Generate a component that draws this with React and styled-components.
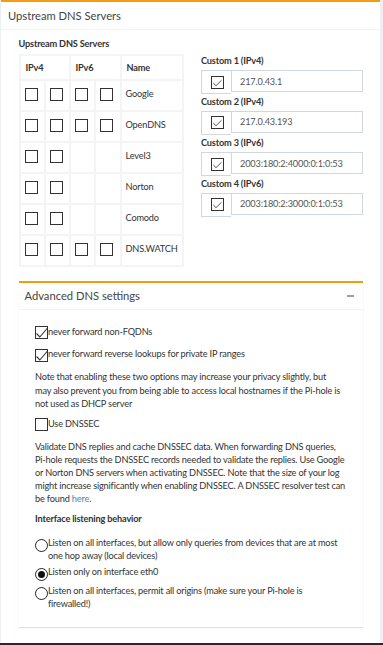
import React from 'react';
import styled, { createGlobalStyle } from 'styled-components';

const Global = createGlobalStyle`
  html, body { margin: 0; padding: 0; }
  body {
    background: #ecf0f5;
    font-family: Lato, "Noto Sans", sans-serif;
    color: #333;
    width: 383px;
    height: 645px;
    overflow: hidden;
    letter-spacing: -0.17px;
  }
  * { box-sizing: border-box; }
`;

const Page = styled.div`
  height: 645px;
  display: flex;
  flex-direction: column;
`;

const Frame = styled.div`
  flex: 1;
  display: flex;
  padding: 0 3px 0 1px;
  min-height: 0;
`;

const Box = styled.section`
  flex: 1;
  min-width: 0;
  background: #fff;
  border-top: 2px solid #f39c12;
  box-shadow: ${(p) => (p.$inner ? '0 1px 1px rgba(0,0,0,0.12)' : 'none')};
`;

const BoxHeader = styled.div`
  display: flex;
  align-items: center;
  justify-content: space-between;
  height: ${(p) => p.$h}px;
  padding: 0 ${(p) => p.$pad}px;
  border-bottom: 1px solid #f4f4f4;
`;

const BoxTitle = styled.h3`
  margin: 0;
  font-size: 11.2px;
  font-weight: 400;
  color: #444;
  line-height: 1;
  letter-spacing: 0;
`;

const Minus = styled.span`
  display: block;
  width: 7px;
  height: 1.5px;
  background: #97a0b3;
  margin-right: 3px;
`;

const BoxBody = styled.div`
  padding: 7px;
`;

const Columns = styled.div`
  display: grid;
  grid-template-columns: minmax(0, 1fr) minmax(0, 1fr);
`;

const Col = styled.div`
  min-width: 0;
  padding: ${(p) => p.$top || 0}px 10.5px 0;
`;

const FieldLabel = styled.div`
  font-size: 9.2px;
  font-weight: 700;
  line-height: 13px;
  margin-bottom: ${(p) => p.$mb || 0}px;
`;

const Table = styled.table`
  border-collapse: collapse;
  table-layout: fixed;
  width: 163px;
  font-size: 9.2px;
`;

const Th = styled.th`
  border: 2px solid #f4f4f4;
  height: 25px;
  padding: 0 5px;
  text-align: left;
  font-weight: 700;
  vertical-align: middle;
`;

const Td = styled.td`
  border: 2px solid #f4f4f4;
  height: 31px;
  padding: ${(p) => (p.$name ? '6px 4px 0' : '7px 0 0 4px')};
  vertical-align: top;
  line-height: 13px;
  white-space: nowrap;
`;

const Box13 = styled.span`
  display: inline-flex;
  flex: none;
  width: 13px;
  height: 13px;
  border: 1px solid #333;
  background: #fff;
  position: relative;
  margin-top: ${(p) => p.$mt || 0}px;
  vertical-align: top;
`;

const CheckSvg = styled.svg`
  position: absolute;
  left: -1px;
  top: -1px;
  overflow: visible;
`;

function Check({ checked, mt, big }) {
  return (
    <Box13 $mt={mt}>
      {checked && (
        <CheckSvg width="13" height="13" viewBox="0 0 13 13">
          {big ? (
            <polyline points="1.5,7.5 4.8,11 12.5,2" fill="none" stroke="#333" strokeWidth="1.1" />
          ) : (
            <polyline points="2.3,7 5,9.7 10.5,4.3" fill="none" stroke="#555" strokeWidth="1" />
          )}
        </CheckSvg>
      )}
    </Box13>
  );
}

const InputGroup = styled.div`
  display: flex;
  align-items: flex-start;
  margin-bottom: ${(p) => p.$mb || 0}px;
`;

const Addon = styled.div`
  width: 30px;
  height: 24px;
  border: 1px solid #d2d6de;
  border-right: none;
  display: flex;
  align-items: center;
  justify-content: center;
  padding-left: 1px;
`;

const TextInput = styled.div`
  flex: 1;
  height: 22px;
  border: 1px solid #d2d6de;
  padding-left: 8px;
  display: flex;
  align-items: center;
  font-size: 9.2px;
  color: #555;
`;

const AdvWrap = styled.div`
  padding: 14px 10.5px 0;
`;

const AdvBody = styled.div`
  padding: 14.5px 15px 16.5px 16.5px;
  font-size: 9.2px;
`;

const OptRow = styled.label`
  display: flex;
  align-items: flex-start;
  line-height: ${(p) => p.$lh || 13}px;
  margin-top: ${(p) => p.$mt || 0}px;
`;

const OptText = styled.span`
  flex: 1;
`;

const Para = styled.p`
  margin: ${(p) => p.$mt || 0}px 0 0;
  line-height: ${(p) => p.$lh || 13}px;
`;

const Link = styled.a`
  color: #3c8dbc;
  text-decoration: none;
`;

const Bold = styled.div`
  font-weight: 700;
  line-height: 13px;
  margin-top: ${(p) => p.$mt || 0}px;
`;

const RadioDot = styled.span`
  flex: none;
  width: 13px;
  height: 13px;
  border-radius: 50%;
  border: 1px solid #222;
  margin-top: ${(p) => p.$mt || 0}px;
  display: flex;
  align-items: center;
  justify-content: center;
  &::after {
    content: '';
    width: 7px;
    height: 7px;
    border-radius: 50%;
    background: ${(p) => (p.$on ? '#111' : 'transparent')};
  }
`;

const BottomBar = styled.div`
  height: 2px;
  background: #2a2a2a;
`;

const rows = [
  { name: 'Google', v6: true },
  { name: 'OpenDNS', v6: true },
  { name: 'Level3', v6: false },
  { name: 'Norton', v6: false },
  { name: 'Comodo', v6: false },
  { name: 'DNS.WATCH', v6: true },
];

const customs = [
  { label: 'Custom 1 (IPv4)', value: '217.0.43.1' },
  { label: 'Custom 2 (IPv4)', value: '217.0.43.193' },
  { label: 'Custom 3 (IPv6)', value: '2003:180:2:4000:0:1:0:53' },
  { label: 'Custom 4 (IPv6)', value: '2003:180:2:3000:0:1:0:53' },
];

export default function App() {
  return (
    <Page>
      <Global />
      <Frame>
        <Box>
          <BoxHeader $h={28} $pad={7}>
            <BoxTitle>Upstream DNS Servers</BoxTitle>
          </BoxHeader>
          <BoxBody>
            <Columns>
              <Col>
                <FieldLabel $mb={4}>Upstream DNS Servers</FieldLabel>
                <Table>
                  <colgroup>
                    <col style={{ width: 25 }} />
                    <col style={{ width: 25 }} />
                    <col style={{ width: 25 }} />
                    <col style={{ width: 26 }} />
                    <col style={{ width: 62 }} />
                  </colgroup>
                  <thead>
                    <tr>
                      <Th colSpan={2}>IPv4</Th>
                      <Th colSpan={2}>IPv6</Th>
                      <Th>Name</Th>
                    </tr>
                  </thead>
                  <tbody>
                    {rows.map((r) => (
                      <tr key={r.name}>
                        <Td><Check /></Td>
                        <Td><Check /></Td>
                        <Td>{r.v6 && <Check />}</Td>
                        <Td>{r.v6 && <Check />}</Td>
                        <Td $name>{r.name}</Td>
                      </tr>
                    ))}
                  </tbody>
                </Table>
              </Col>
              <Col $top={17}>
                {customs.map((c, i) => (
                  <div key={c.label}>
                    <FieldLabel $mb={3}>{c.label}</FieldLabel>
                    <InputGroup $mb={i === 1 ? 1.5 : 0.5}>
                      <Addon><Check checked /></Addon>
                      <TextInput>{c.value}</TextInput>
                    </InputGroup>
                  </div>
                ))}
              </Col>
            </Columns>
            <AdvWrap>
              <Box $inner>
                <BoxHeader $h={27} $pad={6}>
                  <BoxTitle>Advanced DNS settings</BoxTitle>
                  <Minus />
                </BoxHeader>
                <AdvBody>
                  <OptRow>
                    <Check checked big mt={1.5} />
                    <OptText>never forward non-FQDNs</OptText>
                  </OptRow>
                  <OptRow $mt={8}>
                    <Check checked big mt={1.5} />
                    <OptText>never forward reverse lookups for private IP ranges</OptText>
                  </OptRow>
                  <Para $mt={8.5} $lh={13.5}>
                    Note that enabling these two options may increase your privacy slightly, but<br />
                    may also prevent you from being able to access local hostnames if the Pi-hole is<br />
                    not used as DHCP server
                  </Para>
                  <OptRow $mt={6}>
                    <Check mt={1.5} />
                    <OptText>Use DNSSEC</OptText>
                  </OptRow>
                  <Para $mt={9}>
                    Validate DNS replies and cache DNSSEC data. When forwarding DNS queries, Pi-hole requests the DNSSEC records needed to validate the replies. Use Google or Norton DNS servers when activating DNSSEC. Note that the size of your log might increase significantly when enabling DNSSEC. A DNSSEC resolver test can be found <Link href="#">here</Link>.
                  </Para>
                  <Bold $mt={7}>Interface listening behavior</Bold>
                  <OptRow $mt={12} $lh={12.5}>
                    <RadioDot $mt={1.5} />
                    <OptText>Listen on all interfaces, but allow only queries from devices that are at most one hop away (local devices)</OptText>
                  </OptRow>
                  <OptRow $mt={4} $lh={12.5}>
                    <RadioDot $mt={1.5} $on />
                    <OptText>Listen only on interface eth0</OptText>
                  </OptRow>
                  <OptRow $mt={4.5} $lh={12.5}>
                    <RadioDot $mt={1.5} />
                    <OptText>Listen on all interfaces, permit all origins (make sure your Pi-hole is<br />firewalled!)</OptText>
                  </OptRow>
                </AdvBody>
              </Box>
            </AdvWrap>
          </BoxBody>
        </Box>
      </Frame>
      <BottomBar />
    </Page>
  );
}
